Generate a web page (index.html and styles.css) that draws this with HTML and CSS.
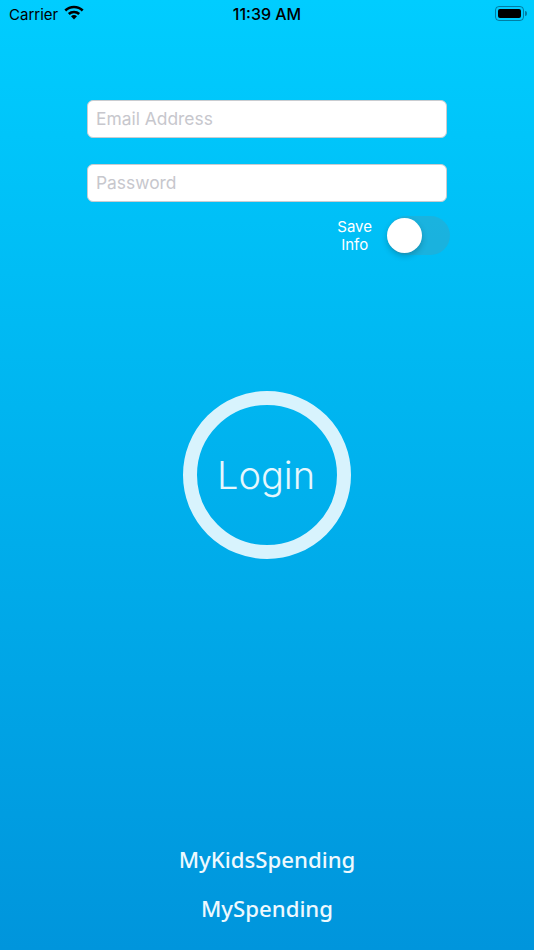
FILE: index.html
```html
<!DOCTYPE html>
<html lang="en">

<head>
    <meta charset="UTF-8">
    <meta name="viewport" content="width=device-width, initial-scale=1.0">
    <title>Login</title>
    <link rel="stylesheet" href="styles.css">
</head>

<body>
    <div class="screen">
        <div class="status-bar">
            <div class="status-left">
                <span class="carrier">Carrier</span>
                <svg class="wifi" width="20" height="15" viewBox="0 0 20 15">
                    <path d="M10 14.6 L7 11.3 A4.4 4.4 0 0 1 13 11.3 Z" fill="#000" />
                    <path d="M3.9 8.1 A8.8 8.8 0 0 1 16.1 8.1 L14.3 10 A6.2 6.2 0 0 0 5.7 10 Z" fill="#000" />
                    <path d="M0.4 4.6 A13.8 13.8 0 0 1 19.6 4.6 L17.8 6.5 A11.2 11.2 0 0 0 2.2 6.5 Z" fill="#000" />
                </svg>
            </div>
            <span class="clock">11:39 AM</span>
            <div class="battery">
                <div class="battery-body">
                    <div class="battery-fill"></div>
                </div>
                <div class="battery-cap"></div>
            </div>
        </div>

        <div class="form">
            <input class="field" type="text" placeholder="Email Address">
            <input class="field" type="password" placeholder="Password">
            <div class="save-row">
                <span class="save-label">Save<br>Info</span>
                <div class="switch">
                    <div class="knob"></div>
                </div>
            </div>
        </div>

        <div class="login-wrap">
            <button class="login">Login</button>
        </div>

        <div class="links">
            <a class="link">MyKidsSpending</a>
            <a class="link">MySpending</a>
        </div>
    </div>
</body>

</html>
```

FILE: styles.css
```css
* {
    box-sizing: border-box;
}

html,
body {
    margin: 0;
    padding: 0;
}

.screen {
    display: flex;
    flex-direction: column;
    width: 534px;
    height: 950px;
    overflow: hidden;
    background: linear-gradient(to bottom, #00cdff 0%, #0095dc 100%);
    font-family: Inter, "Liberation Sans", sans-serif;
}

.status-bar {
    display: grid;
    grid-template-columns: 1fr auto 1fr;
    align-items: center;
    height: 28px;
    padding: 0 9px;
    color: #000;
}

.status-left {
    display: flex;
    align-items: center;
    gap: 6px;
}

.carrier {
    font-size: 15px;
}

.wifi {
    margin-bottom: 4px;
}

.clock {
    font-size: 16px;
    font-weight: 500;
}

.battery {
    display: flex;
    align-items: center;
    justify-self: end;
    gap: 1px;
    margin: 0 -2px 1px 0;
}

.battery-body {
    width: 29px;
    height: 15px;
    padding: 2px;
    border: 1.5px solid rgba(0, 60, 90, 0.55);
    border-radius: 4px;
}

.battery-fill {
    height: 100%;
    background-color: #000;
    border-radius: 2px;
}

.battery-cap {
    width: 2px;
    height: 5px;
    background-color: rgba(0, 60, 90, 0.55);
    border-radius: 0 2px 2px 0;
}

.form {
    display: flex;
    flex-direction: column;
    gap: 26px;
    width: 360px;
    margin: 72px 0 0 87px;
}

.field {
    width: 100%;
    height: 38px;
    padding: 0 8px 1px;
    background-color: #fff;
    border: 1.5px solid #c9ccd0;
    border-radius: 6px;
    font-family: inherit;
    font-size: 17.4px;
    outline: none;
}

.field::placeholder {
    color: #c7c7cd;
    opacity: 1;
}

.save-row {
    display: flex;
    justify-content: flex-end;
    align-items: center;
    gap: 15px;
    margin: -12px -3px 0 0;
}

.save-label {
    color: #fff;
    font-size: 15px;
    line-height: 18px;
    text-align: center;
}

.switch {
    width: 63px;
    height: 39px;
    padding: 2px 0 0 0;
    background-color: rgba(128, 128, 128, 0.2);
    border-radius: 20px;
}

.knob {
    width: 35px;
    height: 35px;
    background-color: #fff;
    border-radius: 50%;
    box-shadow: 0 3px 6px rgba(0, 0, 0, 0.2);
}

.login-wrap {
    display: flex;
    justify-content: center;
    margin-top: 136px;
}

.login {
    width: 168px;
    height: 168px;
    padding: 0 2px 0 0;
    background: transparent;
    border: 14px solid #d8f3fd;
    border-radius: 50%;
    color: #e6f7fd;
    font-family: inherit;
    font-size: 38px;
    font-weight: 300;
}

.links {
    display: flex;
    flex-direction: column;
    align-items: center;
    gap: 21px;
    margin-top: auto;
    padding-bottom: 27px;
}

.link {
    color: #eef9fe;
    font-family: "Noto Sans", sans-serif;
    font-size: 22.2px;
    font-weight: 500;
    line-height: 28px;
}
```
